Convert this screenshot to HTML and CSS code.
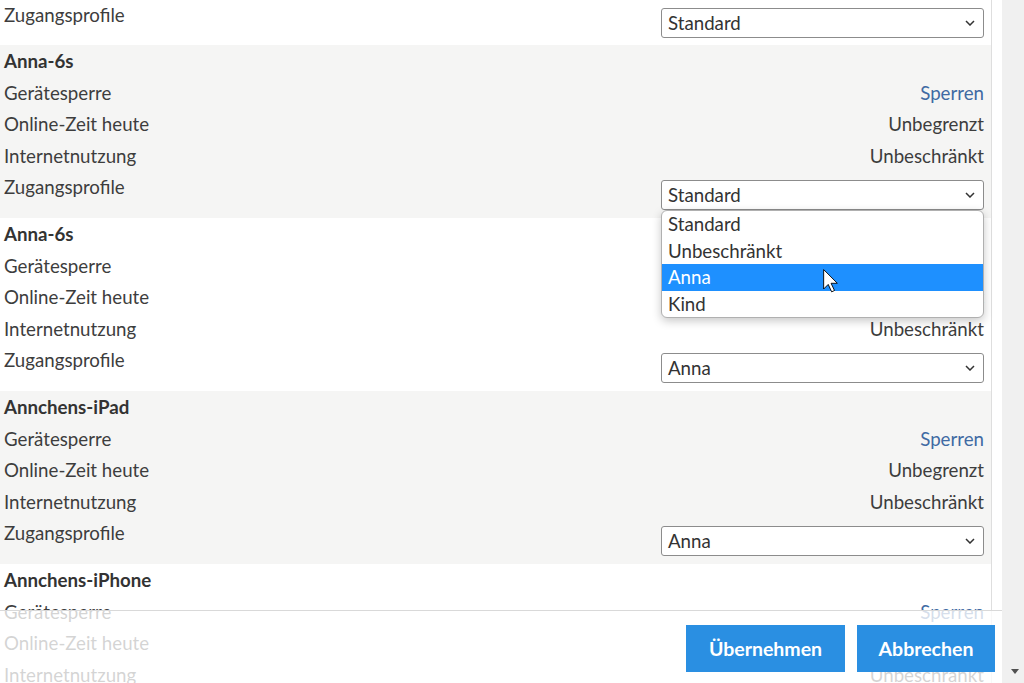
FILE: index.html
```html
<!DOCTYPE html>
<html lang="de">
<head>
<meta charset="utf-8">
<title>Zugangsprofile</title>
<link rel="stylesheet" href="styles.css">
</head>
<body>
<div class="window">
  <div class="page">
    <main class="list">
      <section class="device partial">
        <div class="row last"><span class="label">Zugangsprofile</span><div class="select"><span>Standard</span><svg class="chev" viewBox="0 0 10 6"><path d="M1 1l4 4 4-4"/></svg></div></div>
      </section>
      <section class="device shaded">
        <div class="row title">Anna-6s</div>
        <div class="row"><span class="label">Gerätesperre</span><a class="link">Sperren</a></div>
        <div class="row"><span class="label">Online-Zeit heute</span><span class="value">Unbegrenzt</span></div>
        <div class="row"><span class="label">Internetnutzung</span><span class="value">Unbeschränkt</span></div>
        <div class="row last"><span class="label">Zugangsprofile</span>
          <div class="select-wrap">
            <div class="select"><span>Standard</span><svg class="chev" viewBox="0 0 10 6"><path d="M1 1l4 4 4-4"/></svg></div>
            <ul class="menu">
              <li>Standard</li>
              <li>Unbeschränkt</li>
              <li class="active">Anna</li>
              <li>Kind</li>
            </ul>
            <svg class="cursor" viewBox="0 0 13 21"><path d="M0.5 0.5v17l4-4 3 6.5 2.5-1.2-3-6.3h5.5z" fill="#fff" stroke="#000" stroke-width="0.8" stroke-linejoin="round"/></svg>
          </div>
        </div>
      </section>
      <section class="device">
        <div class="row title">Anna-6s</div>
        <div class="row"><span class="label">Gerätesperre</span><a class="link">Sperren</a></div>
        <div class="row"><span class="label">Online-Zeit heute</span><span class="value">Unbegrenzt</span></div>
        <div class="row"><span class="label">Internetnutzung</span><span class="value">Unbeschränkt</span></div>
        <div class="row last"><span class="label">Zugangsprofile</span><div class="select"><span>Anna</span><svg class="chev" viewBox="0 0 10 6"><path d="M1 1l4 4 4-4"/></svg></div></div>
      </section>
      <section class="device shaded">
        <div class="row title">Annchens-iPad</div>
        <div class="row"><span class="label">Gerätesperre</span><a class="link">Sperren</a></div>
        <div class="row"><span class="label">Online-Zeit heute</span><span class="value">Unbegrenzt</span></div>
        <div class="row"><span class="label">Internetnutzung</span><span class="value">Unbeschränkt</span></div>
        <div class="row last"><span class="label">Zugangsprofile</span><div class="select"><span>Anna</span><svg class="chev" viewBox="0 0 10 6"><path d="M1 1l4 4 4-4"/></svg></div></div>
      </section>
      <section class="device">
        <div class="row title">Annchens-iPhone</div>
        <div class="row"><span class="label">Gerätesperre</span><a class="link">Sperren</a></div>
        <div class="row"><span class="label">Online-Zeit heute</span><span class="value">Unbegrenzt</span></div>
        <div class="row"><span class="label">Internetnutzung</span><span class="value">Unbeschränkt</span></div>
      </section>
    </main>
    <footer class="actions">
      <button class="btn">Übernehmen</button>
      <button class="btn">Abbrechen</button>
    </footer>
  </div>
  <div class="scrollbar"><span class="arrow-down"></span></div>
</div>
</body>
</html>
```

FILE: styles.css
```css
html, body {
  margin: 0;
  padding: 0;
  height: 100%;
  overflow: hidden;
  background: #fff;
}

body {
  font-family: Lato, "Open Sans", "Liberation Sans", sans-serif;
  font-size: 18.7px;
  color: #3d3d3d;
}

.window {
  display: flex;
  height: 683px;
}

.page {
  position: relative;
  width: 1002px;
  height: 683px;
  overflow: hidden;
}

.list {
  width: 992px;
  height: 683px;
  box-sizing: border-box;
  border-right: 1px solid #dedede;
}

.device {
  height: 173px;
  box-sizing: border-box;
  padding: 1px 7px 0 4px;
  background: #fff;
}

.device.shaded {
  background: #f5f5f4;
}

.device.partial {
  height: 45px;
  padding-top: 0;
}

.row {
  display: flex;
  justify-content: space-between;
  align-items: flex-start;
  height: 31.6px;
  line-height: 31.6px;
}

.row.title {
  font-weight: 700;
  color: #333;
}

.row.last {
  height: auto;
}

.partial .row.last .label {
  line-height: 30px;
}

.select-wrap {
  position: relative;
}

.select {
  display: flex;
  align-items: center;
  justify-content: space-between;
  width: 323px;
  height: 30px;
  box-sizing: border-box;
  margin-top: 7.8px;
  padding: 0 8px 0 6px;
  border: 1px solid #8c8c8c;
  border-radius: 3px;
  background: #fff;
  line-height: 28px;
  color: #333;
}

.partial .select {
  margin-top: 8px;
}

.chev {
  width: 10px;
  height: 6px;
  fill: none;
  stroke: #333;
  stroke-width: 1.5;
}

.menu {
  position: absolute;
  top: 38px;
  left: 0;
  width: 321px;
  margin: 0;
  padding: 0;
  list-style: none;
  background: #fff;
  border: 1px solid #b0b0b0;
  border-radius: 6px;
  box-shadow: 0 3px 10px rgba(0, 0, 0, 0.22);
  overflow: hidden;
  z-index: 5;
}

.menu li {
  height: 26.5px;
  line-height: 26.5px;
  padding-left: 6px;
  color: #333;
}

.menu li.active {
  background: #1e90ff;
  color: #fff;
}

.cursor {
  position: absolute;
  top: 97px;
  left: 162px;
  width: 15px;
  height: 24px;
  z-index: 6;
}

.link {
  color: #3f6aa3;
}

.value {
  color: #3d3d3d;
}

.actions {
  position: absolute;
  left: 0;
  bottom: 0;
  width: 1002px;
  height: 73px;
  box-sizing: border-box;
  border-top: 1px solid #d9d9d9;
  background: rgba(255, 255, 255, 0.78);
  display: flex;
  justify-content: flex-end;
  align-items: flex-start;
  gap: 12px;
  padding: 14px 7px 0 0;
}

.btn {
  height: 47px;
  border: none;
  background: #2a8fe2;
  color: #fff;
  font-family: inherit;
  font-size: 19.5px;
  font-weight: 700;
  padding: 0;
  margin: 0;
}

.btn:first-child {
  width: 159px;
}

.btn:last-child {
  width: 138px;
}

.scrollbar {
  position: relative;
  width: 22px;
  height: 683px;
  background: #f0f0f0;
}

.arrow-down {
  position: absolute;
  left: 9px;
  bottom: 9px;
  width: 0;
  height: 0;
  border-left: 4px solid transparent;
  border-right: 4px solid transparent;
  border-top: 5px solid #505050;
}
```
